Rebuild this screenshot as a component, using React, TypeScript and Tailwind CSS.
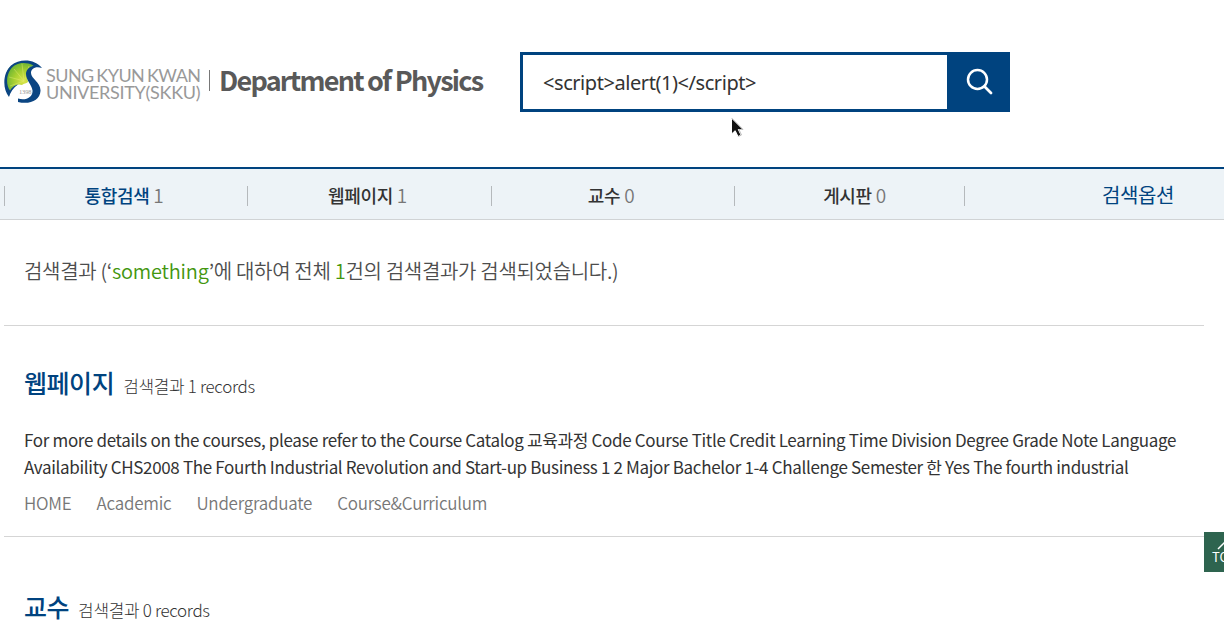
import type { ReactNode } from "react";

const BASE = "font-['Noto_Sans_CJK_KR',sans-serif]";

function Emblem() {
  return (
    <svg className="mt-[7px] h-[46px] w-[40px] shrink-0" viewBox="0 0 40 46" fill="none">
      <defs>
        <radialGradient id="leaf" cx="0.6" cy="0.6" r="0.65">
          <stop offset="0" stopColor="#dce64c" />
          <stop offset="0.5" stopColor="#a6cf30" />
          <stop offset="1" stopColor="#5fae35" />
        </radialGradient>
      </defs>
      <path d="M5 35C0 27 0 16 5 9C12 2 23 1 32 6C25 8 22 11 23 17L24 23C22 25 20 24 18 26C12 24 8 28 5 35Z" fill="url(#leaf)" />
      <path d="M20 22L10 10M20 22L18 5M20 22L5 18M20 22L6 27M21 20L25 7" stroke="#e2ec75" strokeOpacity="0.5" strokeWidth="0.9" />
      <path
        d="M5 38C-2 29-1 14 7 6.500C16-1 31 0 38 9C31 7 27 10 27 14C27 20 37 23 36.500 32C36 41 26 46 14 43L14 39.500C22 42 29 38 28.500 31.500C28 26 22 21 22 15C22 11 25 8 29.500 6.500C20 2 11 4 6.500 10.500C2 17 2 26 6 31.500C8 28 10.500 26 14 25.500C9 29 6.500 33 5 38Z"
        fill="#0b4582"
      />
      <text x="15" y="35" fontSize="6.500" textLength="12.500" fill="#999" fontFamily="Liberation Serif, serif">1398</text>
    </svg>
  );
}

function Tab({ label, count, width, active = false }: { label: string; count: number; width: string; active?: boolean }) {
  return (
    <div className={`flex h-5 shrink-0 items-baseline justify-center border-l border-[#b5b9bc] text-[18px] leading-[18px] tracking-[-0.360px] ${width}`}>
      <span className={active ? "font-medium text-[#00437f]" : "font-medium text-[#333]"}>{label}</span>
      <span className="ml-[4px] text-[19px] font-[350] text-[#777]">{count}</span>
    </div>
  );
}

function SectionTitle({ title, children }: { title: string; children: ReactNode }) {
  return (
    <div className="flex items-baseline gap-[9px] pl-5">
      <h2 className="text-[25px] leading-[36px] font-medium tracking-[-0.450px] text-[#00437f]">{title}</h2>
      <span className="text-[17px] font-light tracking-[-0.340px] text-[#333]">{children}</span>
    </div>
  );
}

export default function App() {
  return (
    <div className={`relative h-[628px] w-[1224px] overflow-hidden bg-white ${BASE}`}>
      <header className="flex h-[167px] items-start pt-[52px] pl-1">
        <div className="flex h-[60px] w-[516px] items-start whitespace-nowrap">
          <Emblem />
          <div className="mt-[15px] ml-[2px] w-[159px] font-['Lato',sans-serif] text-[18px] leading-[17px] text-[#999]">
            <div className="tracking-[-0.550px] [word-spacing:-1.400px]">SUNG KYUN KWAN</div>
            <div className="tracking-[-0.300px]">UNIVERSITY(SKKU)</div>
          </div>
          <div className="mt-[18px] ml-1 h-[21px] w-px bg-[#777]" />
          <h1 className="mt-[8px] ml-[9px] text-[27px] leading-[40px] font-bold tracking-[-1.770px] text-[#595959]">Department of Physics</h1>
        </div>
        <form className="flex h-[60px] w-[490px] border-[3px] border-[#00437f]" onSubmit={(e) => e.preventDefault()}>
          <input
            className="w-[424px] bg-white pt-[2px] pl-5 font-['Noto_Sans',sans-serif] text-[20px] tracking-[-0.440px] text-[#333] outline-none"
            defaultValue="<script>alert(1)</script>"
          />
          <button className="flex flex-1 items-center justify-center bg-[#00437f] pb-[2px] pl-1" aria-label="검색">
            <svg width="27" height="27" viewBox="0 0 27 27" fill="none" stroke="white" strokeWidth="2.500" strokeLinecap="round">
              <circle cx="11.500" cy="11.500" r="9.500" />
              <path d="M18.500 18.500L25 25" strokeWidth="2.800" />
            </svg>
          </button>
        </form>
      </header>

      <nav className="flex h-[53px] items-center border-t-2 border-b border-t-[#00437f] border-b-[#d0d3d5] bg-[#edf3f7] pt-[3px] pl-1">
        <Tab label="통합검색" count={1} width="w-[243px] pr-1" active />
        <Tab label="웹페이지" count={1} width="w-[244px] pr-1" />
        <Tab label="교수" count={0} width="w-[243px] pr-1" />
        <Tab label="게시판" count={0} width="w-[230px] pl-[10px]" />
        <div className="flex h-5 flex-1 items-center border-l border-[#b5b9bc] pb-[2px] pl-[137px] text-[20px] tracking-[-0.400px] whitespace-nowrap text-[#00437f]">
          검색옵션
        </div>
      </nav>

      <main className="ml-1 w-[1200px]">
        <p className="h-[106px] border-b border-[#d5d5d5] pt-9 pl-5 text-[20px] leading-[30px] font-[350] tracking-[-0.310px] whitespace-nowrap text-[#4d4d4d]">
          검색결과 (‘<span className="tracking-[-0.200px] text-[#43960f]">something</span>’에 대하여 전체{" "}
          <span className="text-[#43960f]">1</span>건의 검색결과가 검색되었습니다.)
        </p>

        <section className="h-[211px] border-b border-[#d5d5d5] pt-[38px]">
          <SectionTitle title="웹페이지">검색결과 1 records</SectionTitle>
          <p className="mt-[26px] pl-5 text-[17px] leading-[27px] tracking-[-0.336px] whitespace-nowrap text-[#333]">
            For more details on the courses, please refer to the Course Catalog 교육과정 Code Course Title Credit Learning Time Division Degree Grade Note Language
            <br />
            Availability CHS2008 The Fourth Industrial Revolution and Start-up Business 1 2 Major Bachelor 1-4 Challenge Semester 한 Yes The fourth industrial
          </p>
          <div className="mt-[9px] flex gap-[25px] pl-5 text-[17px] leading-[27px] font-[350] tracking-[-0.230px] text-[#777]">
            <span>HOME</span>
            <span>Academic</span>
            <span>Undergraduate</span>
            <span>Course&amp;Curriculum</span>
          </div>
        </section>

        <section className="pt-[51px]">
          <SectionTitle title="교수">검색결과 0 records</SectionTitle>
        </section>
      </main>

      <button className="absolute top-[532px] left-[1204px] h-10 w-10 bg-[#2e644f] text-white" aria-label="TOP">
        <svg className="absolute top-[9px] left-[13px]" width="14" height="9" viewBox="0 0 14 9" fill="none" stroke="white" strokeWidth="1.500">
          <path d="M1 8L7 2L13 8" />
        </svg>
        <span className="absolute top-[17px] left-2 text-[13px] leading-[16px]">TOP</span>
      </button>

      <svg className="absolute top-[117px] left-[730px]" width="16" height="21" viewBox="0 0 16 21">
        <path d="M1.500 1V17L5.200 13.700L8 19.500L11 18L8.300 12.500H13Z" fill="#111" stroke="white" strokeWidth="1" />
        <path d="M1.500 1L13 12.500H9L11.500 18L8.500 19.500" fill="none" stroke="#999" strokeWidth="0.600" />
      </svg>
    </div>
  );
}
